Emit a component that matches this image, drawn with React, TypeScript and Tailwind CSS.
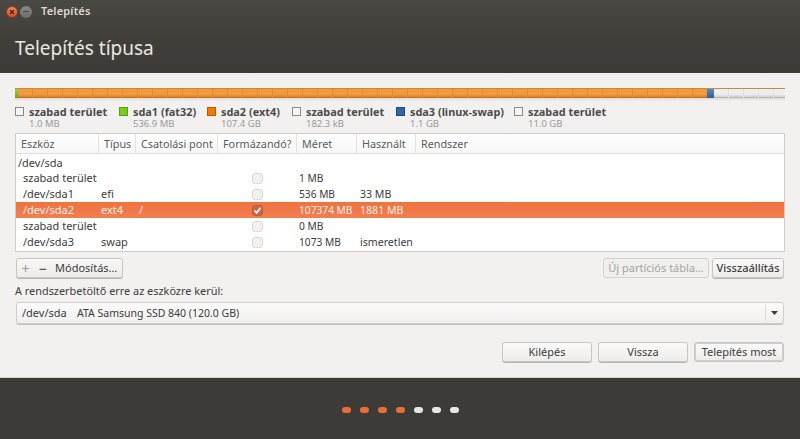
import React from "react";

const font = { fontFamily: '"Noto Sans", "Open Sans", sans-serif' };

const legend = [
  { name: "szabad terület", size: "1.0 MB", box: "border-[#8a8a8a] bg-[#f6f6f5]", w: "w-[104px]" },
  { name: "sda1 (fat32)", size: "536.9 MB", box: "border-[#5e9c12] bg-[#73d216]", w: "w-[88px]" },
  { name: "sda2 (ext4)", size: "107.4 GB", box: "border-[#b95c00] bg-[#f57900]", w: "w-[85px]" },
  { name: "szabad terület", size: "182.3 kB", box: "border-[#8a8a8a] bg-[#f6f6f5]", w: "w-[104px]" },
  { name: "sda3 (linux-swap)", size: "1.1 GB", box: "border-[#204a87] bg-[#3465a4]", w: "w-[118px]" },
  { name: "szabad terület", size: "11.0 GB", box: "border-[#8a8a8a] bg-[#f6f6f5]", w: "w-[110px]" },
];

const headers = [
  { t: "Eszköz", w: "w-[83px]" },
  { t: "Típus", w: "w-[37px]" },
  { t: "Csatolási pont", w: "w-[82px]" },
  { t: "Formázandó?", w: "w-[79px]" },
  { t: "Méret", w: "w-[60px]" },
  { t: "Használt", w: "w-[59px]" },
  { t: "Rendszer", w: "flex-1" },
];

const rows = [
  { dev: "szabad terület", type: "", mount: "", size: "1 MB", used: "" },
  { dev: "/dev/sda1", type: "efi", mount: "", size: "536 MB", used: "33 MB" },
  { dev: "/dev/sda2", type: "ext4", mount: "/", size: "107374 MB", used: "1881 MB", sel: true },
  { dev: "szabad terület", type: "", mount: "", size: "0 MB", used: "" },
  { dev: "/dev/sda3", type: "swap", mount: "", size: "1073 MB", used: "ismeretlen" },
];

function Btn({ children, className = "" }: { children: React.ReactNode; className?: string }) {
  return (
    <div className={`flex h-[20px] items-center justify-center rounded-[3px] border border-[#c8c5c2] bg-gradient-to-b from-[#fbfafa] to-[#eeecea] text-[11px] text-[#3c3c3c] shadow-[0_1px_0_#b8b5b2] ${className}`}>
      {children}
    </div>
  );
}

export default function App() {
  return (
    <div style={font} className="flex h-[439px] w-[800px] flex-col overflow-hidden bg-[#f2f1f0] text-[11px] text-[#3c3c3c]">
      {/* Title area */}
      <div className="h-[73px] shrink-0 bg-gradient-to-b from-[#4a4843] via-[#403f3a] to-[#3c3b37]">
        <div className="flex h-[23px] items-center pl-[6px]">
          <div className="flex h-[12px] w-[12px] items-center justify-center rounded-full border border-[#8d3a20] bg-gradient-to-b from-[#f08a60] to-[#d84a22]">
            <svg width="6" height="6" viewBox="0 0 6 6">
              <path d="M1 1 L5 5 M5 1 L1 5" stroke="#4a2010" strokeWidth="1.2" />
            </svg>
          </div>
          <div className="ml-[2px] flex h-[12px] w-[12px] items-center justify-center rounded-full bg-gradient-to-b from-[#8a8883] to-[#6e6c67]">
            <div className="h-[1px] w-[6px] bg-[#4a4945]" />
          </div>
          <span className="ml-[9px] text-[11px] font-semibold tracking-[0.2px] text-[#dfdbd2]">Telepítés</span>
        </div>
        <div className="pl-[15px] pt-[10px] text-[19px] leading-[30px] text-[#eae7e2]">Telepítés típusa</div>
      </div>

      {/* Content */}
      <div className="flex h-[304px] shrink-0 flex-col px-[15px] pt-[15px]">
        {/* Partition bar */}
        <div className="flex h-[10px] w-[770px] shrink-0 border-t border-[#c98a45]">
          <div className="h-full w-[3px] bg-gradient-to-b from-[#8fdc3c] to-[#5fa812]" />
          <div className="h-full w-[689px] bg-[repeating-linear-gradient(90deg,transparent_0,transparent_14px,#e38a36_14px,#e38a36_15px),linear-gradient(180deg,#f29a3e_0%,#f29a3e_60%,#e08428_85%,#b5681c_100%)]" />
          <div className="h-full w-[7px] bg-gradient-to-b from-[#5d88bc] to-[#335f96]" />
          <div className="h-full flex-1 bg-[repeating-linear-gradient(90deg,transparent_0,transparent_14px,#e2e2e2_14px,#e2e2e2_15px),linear-gradient(180deg,#f0f0f0_0%,#ececec_60%,#d4d4d4_85%,#a8a8a8_100%)]" />
        </div>
        <div className="h-[3px] w-[770px] shrink-0 bg-gradient-to-b from-[#dfd8cf] to-[#f2f1f0]" />

        {/* Legend */}
        <div className="mt-[2px] flex h-[25px] shrink-0 pt-[2px]">
          {legend.map((l, i) => (
            <div key={i} className={`${l.w} flex shrink-0`}>
              <div className={`mt-[2px] h-[9px] w-[9px] shrink-0 border ${l.box}`} />
              <div className="ml-[5px] whitespace-nowrap">
                <div className="text-[10.9px] font-bold leading-[13px] text-[#4c4c4c]">{l.name}</div>
                <div className="text-[9.5px] leading-[11px] text-[#9a9a98]">{l.size}</div>
              </div>
            </div>
          ))}
        </div>

        {/* Table */}
        <div className="mt-[5px] h-[119px] w-[770px] shrink-0 border border-[#cfccc9] bg-white">
          <div className="flex h-[20px] border-b border-[#e2e0de] bg-gradient-to-b from-white to-[#f8f7f7]">
            {headers.map((h, i) => (
              <div key={i} className={`${h.w} flex shrink-0 items-center border-r border-[#e4e2e0] pl-[5px] pt-[1px] text-[10.8px] text-[#5c5c5c] last:border-r-0`}>
                {h.t}
              </div>
            ))}
          </div>
          <div className="flex h-[16px] items-center pl-[2px] pt-[2px] text-[11px]">/dev/sda</div>
          {rows.map((r, i) => (
            <div key={i} className={`flex h-[16px] items-center pt-[1px] text-[11px] ${r.sel ? "bg-gradient-to-b from-[#ef7340] to-[#f27e4e] text-[#fdf0ea]" : ""}`}>
              <div className="w-[83px] shrink-0 whitespace-nowrap pl-[7px]">{r.dev}</div>
              <div className="w-[37px] shrink-0 pl-[2px]">{r.type}</div>
              <div className="w-[82px] shrink-0 pl-[3px]">{r.mount}</div>
              <div className="flex w-[79px] shrink-0 justify-center">
                <div className={`flex h-[11px] w-[11px] items-center justify-center rounded-[3px] border ${r.sel ? "border-[#b4623c] bg-[#c56a42]" : "border-[#dcdad8] bg-[#f2f1f0]"}`}>
                  {r.sel && (
                    <svg width="9" height="9" viewBox="0 0 9 9">
                      <path d="M1.5 4.5 L3.6 6.8 L7.6 1.8" fill="none" stroke="#fff" strokeWidth="1.6" />
                    </svg>
                  )}
                </div>
              </div>
              <div className="w-[60px] shrink-0 whitespace-nowrap pl-[2px] text-[10.2px]">{r.size}</div>
              <div className="flex-1 pl-[3px] text-[10.6px]">{r.used}</div>
            </div>
          ))}
        </div>

        {/* Table buttons */}
        <div className="mt-[6px] flex h-[20px] w-[770px] shrink-0 pl-[1px] pr-[1px]">
          <div className="flex h-[20px] w-[107px] items-center rounded-[3px] border border-[#c8c5c2] bg-gradient-to-b from-[#f8f7f7] to-[#eeecea] shadow-[0_1px_0_#b8b5b2]">
            <div className="flex h-full w-[17px] items-center justify-center text-[14px] text-[#9a9a98]">+</div>
            <div className="flex h-full w-[18px] items-center justify-center text-[14px] text-[#3c3c3c]">−</div>
            <div className="ml-[3px] whitespace-nowrap text-[11px]">Módosítás…</div>
          </div>
          <div className="ml-auto flex gap-[3px]">
            <div className="flex h-[20px] w-[106px] items-center justify-center rounded-[3px] border border-[#d4d2d0] bg-[#f0efee] text-[11px] text-[#a5a5a3]">Új partíciós tábla…</div>
            <Btn className="w-[72px] font-medium">Visszaállítás</Btn>
          </div>
        </div>

        {/* Boot loader */}
        <div className="mt-[5px] h-[16px] shrink-0 text-[10.9px] leading-[16px]">A rendszerbetöltő erre az eszközre kerül:</div>
        <div className="ml-[1px] mt-[3px] flex h-[22px] w-[768px] shrink-0 items-center rounded-[3px] border border-[#cfccc9] bg-gradient-to-b from-[#fcfbfb] to-[#f1f0ef] shadow-[0_1px_0_#c4c1be]">
          <div className="flex flex-1 items-center whitespace-pre pl-[5px] pt-[1px]">
            <span className="w-[55px] text-[11px]">/dev/sda</span>
            <span className="text-[10.5px]">ATA Samsung SSD 840 (120.0 GB)</span>
          </div>
          <div className="flex h-[16px] w-[18px] items-center justify-center border-l border-[#dddbd9]">
            <svg width="7" height="4" viewBox="0 0 7 4">
              <path d="M0 0 H7 L3.5 4 Z" fill="#3c3c3c" />
            </svg>
          </div>
        </div>

        {/* Nav buttons */}
        <div className="mt-[18px] flex w-[769px] shrink-0 justify-end gap-[6px]">
          <Btn className="w-[90px]">Kilépés</Btn>
          <Btn className="w-[90px]">Vissza</Btn>
          <Btn className="w-[90px] border-[#8e8b88] shadow-[inset_0_0_0_1px_#d0cdca]">Telepítés most</Btn>
        </div>
      </div>

      {/* Footer */}
      <div className="flex flex-1 items-center justify-center gap-[9px] border-t border-[#d6d4d2] bg-[#3c3b37] pt-[2px]">
        {[0, 1, 2, 3].map((i) => (
          <div key={i} className="h-[6px] w-[9px] rounded-[3px] bg-[#e96f38] blur-[0.5px]" />
        ))}
        {[0, 1, 2].map((i) => (
          <div key={i} className="h-[6px] w-[9px] rounded-[3px] bg-[#e6e6e4] blur-[0.5px]" />
        ))}
      </div>
    </div>
  );
}
